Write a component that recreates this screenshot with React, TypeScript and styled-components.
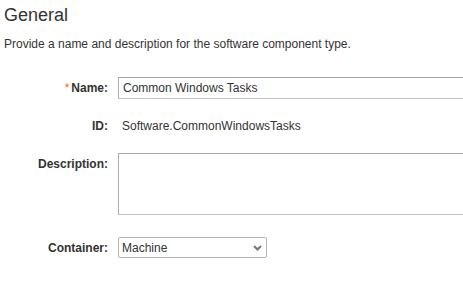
import React from 'react';
import styled, { createGlobalStyle } from 'styled-components';

const GlobalStyle = createGlobalStyle`
  html, body {
    margin: 0;
    padding: 0;
    background: #fff;
    overflow: hidden;
  }
  body {
    font-family: "Liberation Sans", Arial, sans-serif;
    color: #333;
  }
`;

const Page = styled.div`
  padding: 5px 0 0 4px;
  width: 463px;
  height: 286px;
  box-sizing: border-box;
`;

const Title = styled.h2`
  margin: 0;
  font-size: 18px;
  line-height: 21px;
  font-weight: normal;
  color: #333;
`;

const Intro = styled.p`
  margin: 11px 0 0;
  font-size: 12px;
  line-height: 14px;
  color: #333;
`;

const Form = styled.div`
  display: flex;
  flex-direction: column;
  margin-top: 26px;
`;

const Row = styled.div<{ $gap: number; $align?: string }>`
  display: grid;
  grid-template-columns: 104px 1fr;
  column-gap: 10px;
  align-items: ${(p) => p.$align || 'center'};
  margin-bottom: ${(p) => p.$gap}px;
`;

const Label = styled.label<{ $top?: number }>`
  text-align: right;
  font-size: 12px;
  font-weight: bold;
  color: #333;
  padding-top: ${(p) => p.$top || 0}px;
`;

const Required = styled.span`
  color: #ef6c2b;
  font-weight: normal;
  margin-right: 2px;
`;

const TextInput = styled.input`
  width: 380px;
  height: 22px;
  box-sizing: border-box;
  border: 1px solid #c4c4c4;
  border-top-color: #a6a6a6;
  border-left-color: #b0b0b0;
  padding: 0 4px;
  font-family: "Liberation Sans", Arial, sans-serif;
  font-size: 12px;
  color: #333;
  outline: none;
`;

const Value = styled.div`
  font-size: 12px;
  line-height: 22px;
  padding-left: 4px;
  color: #333;
`;

const TextArea = styled.textarea`
  width: 380px;
  height: 62px;
  box-sizing: border-box;
  border: 1px solid #c4c4c4;
  border-top-color: #a6a6a6;
  border-left-color: #b0b0b0;
  resize: none;
  display: block;
  outline: none;
`;

const SelectWrap = styled.div`
  position: relative;
  width: 149px;
  height: 21px;
`;

const Select = styled.select`
  appearance: none;
  width: 149px;
  height: 21px;
  box-sizing: border-box;
  border: 1px solid #b4b4b4;
  border-radius: 2px;
  background: #fff;
  padding: 0 3px;
  font-family: "Liberation Sans", Arial, sans-serif;
  font-size: 12px;
  color: #333;
  outline: none;
`;

const Chevron = styled.svg`
  position: absolute;
  right: 5px;
  top: 8px;
  pointer-events: none;
`;

const App: React.FC = () => {
  return (
    <>
      <GlobalStyle />
      <Page>
        <Title>General</Title>
        <Intro>Provide a name and description for the software component type.</Intro>
        <Form>
          <Row $gap={16}>
            <Label>
              <Required>*</Required>Name:
            </Label>
            <TextInput defaultValue="Common Windows Tasks" />
          </Row>
          <Row $gap={16}>
            <Label>ID:</Label>
            <Value>Software.CommonWindowsTasks</Value>
          </Row>
          <Row $gap={22} $align="start">
            <Label $top={4}>Description:</Label>
            <TextArea />
          </Row>
          <Row $gap={0}>
            <Label>Container:</Label>
            <SelectWrap>
              <Select defaultValue="Machine">
                <option value="Machine">Machine</option>
              </Select>
              <Chevron width="9" height="6" viewBox="0 0 9 6">
                <path d="M1 1 L4.5 4.5 L8 1" fill="none" stroke="#777" strokeWidth="2" />
              </Chevron>
            </SelectWrap>
          </Row>
        </Form>
      </Page>
    </>
  );
};

export default App;
